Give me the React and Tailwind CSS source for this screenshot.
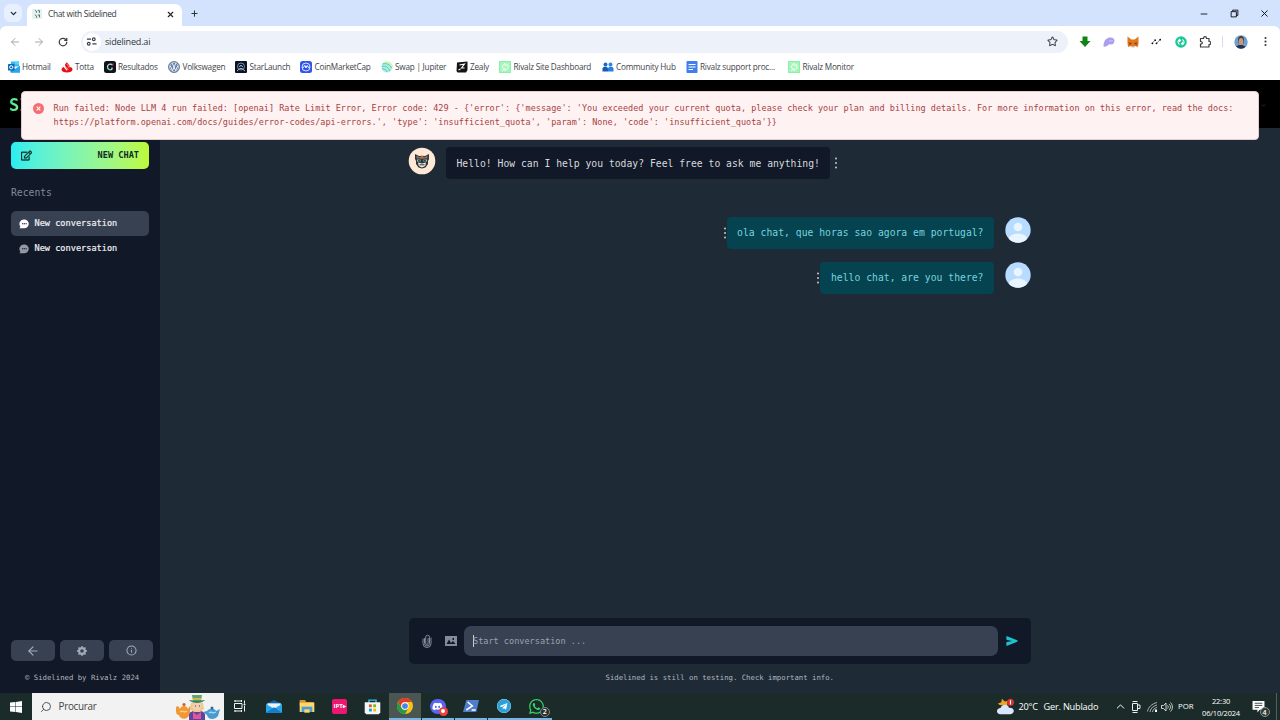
import React from "react";
import { ChevronDown, X, Plus, ArrowLeft, ArrowRight, RotateCw, Star, Minus, ChevronUp, Info, Search } from "lucide-react";
import { FaRegEdit, FaDiscord, FaTelegram, FaWhatsapp } from "react-icons/fa";
import { BsGearFill, BsThreeDotsVertical } from "react-icons/bs";
import { IoSend } from "react-icons/io5";

const ui = "font-['Open_Sans','Noto_Sans',sans-serif]";
const mono = "font-['DejaVu_Sans_Mono','Liberation_Mono',monospace]";

function Svg({ s = 12, vb = "0 0 24 24", children, className = "" }) {
  return (
    <svg width={s} height={s} viewBox={vb} fill="none" className={"shrink-0 " + className}>
      {children}
    </svg>
  );
}

const RivalzIcon = () => (
  <Svg>
    <rect x="1" y="1" width="22" height="22" fill="#a5f5bd" stroke="#8af0aa" strokeWidth="2" />
    <path d="M7 10l5-6v6l6-4M6 20l6-5v5l6-6M7 10v4l5 1M18 8v6" stroke="#f1fff5" strokeWidth="2" />
  </Svg>
);

const bookmarkIcons = {
  hotmail: (
    <Svg>
      <path d="M6 1h16v10H6z" fill="#35b8f1" />
      <path d="M14 1h8v6h-8z" fill="#50d9ff" />
      <path d="M5 10l9 6 10-6v13H5z" fill="#1490df" />
      <path d="M5 23l19-13v13z" fill="#28a8ea" />
      <rect x="0" y="6" width="13" height="13" rx="1" fill="#0f6cbd" />
      <circle cx="6.5" cy="12.5" r="3.2" stroke="#fff" strokeWidth="2" />
    </Svg>
  ),
  totta: (
    <Svg>
      <path d="M12 1c-1 4 6 6 5 11 4 0 6 2 6 5 0 4-5 6-11 6S1 21 1 17c0-3 3-5 5-5 0 3 5 5 6 8 2-5-5-7-4-12 0-3 4-4 4-7z" fill="#e60f13" />
      <path d="M8 9c1 4 6 5 6 9M12 6c1 3 4 4 4 8" stroke="#fff" strokeWidth="1" />
    </Svg>
  ),
  results: (
    <Svg>
      <rect width="24" height="24" rx="5" fill="#10151d" />
      <path d="M17 8c-4-4-10-1-10 4s6 7 9 4v-3" stroke="#d8e8e3" strokeWidth="2.4" />
      <path d="M15 6l4-1-1 5z" fill="#e5405e" />
      <path d="M7 12c0 5 4 6 7 5" stroke="#4ddca4" strokeWidth="2" />
    </Svg>
  ),
  vw: (
    <Svg>
      <circle cx="12" cy="12" r="11" fill="#6682a8" stroke="#51698a" strokeWidth="1.5" />
      <circle cx="12" cy="12" r="9" stroke="#cfd9e6" strokeWidth="1.5" />
      <path d="M8 4l4 8 4-8M4 9l5 10 3-7 3 7 5-10" stroke="#fff" strokeWidth="1.8" />
    </Svg>
  ),
  star: (
    <Svg>
      <rect width="24" height="24" rx="2" fill="#0d1420" />
      <circle cx="12" cy="11" r="7" stroke="#7390b9" strokeWidth="2" />
      <path d="M4 20l6-5h4l6 5M9 12a3 3 0 016 0" stroke="#a5bbdb" strokeWidth="2" />
    </Svg>
  ),
  cmc: (
    <Svg>
      <rect width="24" height="24" rx="5" fill="#3156ee" />
      <circle cx="12" cy="12" r="8" stroke="#d6defc" strokeWidth="2" />
      <path d="M5 13c3 2 3-5 5-4l2 5 2-5c3 0 1 6 5 4" stroke="#fff" strokeWidth="2" />
    </Svg>
  ),
  jup: (
    <Svg>
      <circle cx="12" cy="12" r="11" fill="#b5edda" />
      <path d="M3 6c9-3 15 2 18 8M2 11c7-2 13 1 15 9M2 16c5-1 9 2 10 6" stroke="#3fcbcf" strokeWidth="2" />
      <path d="M6 3c7-1 14 2 17 8" stroke="#d9f4a5" strokeWidth="3" />
    </Svg>
  ),
  zealy: (
    <Svg>
      <path d="M2 3l21-2v17l-3 5H3L1 20z" fill="#141414" />
      <path d="M7 8l10-2-6 8h6M5 18l4-2" stroke="#fff" strokeWidth="2.2" />
    </Svg>
  ),
  rivalz: <RivalzIcon />,
  people: (
    <Svg>
      <circle cx="7" cy="7" r="4" fill="#196ccd" />
      <circle cx="17" cy="7" r="4" fill="#2c88e8" />
      <path d="M1 21v-6c0-5 11-5 11 0v6z" fill="#145cb3" />
      <path d="M12 21v-6c0-5 11-5 11 0v6z" fill="#2680e0" />
    </Svg>
  ),
  doc: (
    <Svg>
      <rect x="1" y="0" width="22" height="24" rx="2" fill="#3f7fed" />
      <path d="M5 7h14M5 12h14M5 17h9" stroke="#fff" strokeWidth="2.4" />
    </Svg>
  ),
};

const bookmarks = [
  ["hotmail", "Hotmail", "w-[53px]"],
  ["totta", "Totta", "w-[43px]"],
  ["results", "Resultados", "w-[64.5px]"],
  ["vw", "Volkswagen", "w-[67px]"],
  ["star", "StarLaunch", "w-[65px]"],
  ["cmc", "CoinMarketCap", "w-[80.5px]"],
  ["jup", "Swap | Jupiter", "w-[75px]"],
  ["zealy", "Zealy", "w-[43.5px]"],
  ["rivalz", "Rivalz Site Dashboard", "w-[102.5px]"],
  ["people", "Community Hub", "w-[84px]"],
  ["doc", "Rivalz support proc...", "w-[102.5px]"],
  ["rivalz", "Rivalz Monitor", "w-[80px]"],
];

function Browser() {
  return (
    <header className={ui + " h-[80px] shrink-0 bg-white"}>
      <div className="flex h-[26px] items-end bg-[#d3e3fd]">
        <div className="mb-[4px] ml-[4px] flex h-[18px] w-[18px] items-center justify-center rounded-md bg-[#e9f0fd]">
          <ChevronDown size={9} strokeWidth={3.5} color="#1f2937" />
        </div>
        <div className="ml-[5px] flex h-[22px] w-[155px] items-center rounded-t-[7px] bg-white pl-[5px] pr-[7px] pb-[2px]">
          <Svg s={10}>
            <rect width="24" height="24" fill="#e4f1ef" />
            <path d="M7 3l4 3v3M7 14l4 3v4M14 4h4v5M14 15l4-1v6" stroke="#52716f" strokeWidth="2.4" />
          </Svg>
          <span className="ml-[6px] flex-1 whitespace-nowrap text-[8.4px] leading-none tracking-[-0.34px] text-[#34383d]">Chat with Sidelined</span>
          <X size={9} strokeWidth={3} color="#202124" />
        </div>
        <div className="mb-[8px] ml-[8px]">
          <Plus size={9} strokeWidth={2.8} color="#303640" />
        </div>
        <div className="mb-[7px] ml-auto flex items-center pr-[10px]">
          <Minus size={10} strokeWidth={2.2} color="#111" />
          <Svg s={9} className="ml-[21px]">
            <path d="M3 7h14v14H3zM7 6V3h14v14h-4" stroke="#111" strokeWidth="2.5" />
          </Svg>
          <X size={11} strokeWidth={2.1} color="#111" className="ml-[20px]" />
        </div>
      </div>
      <div className="bg-[#d3e3fd]">
        <div className="flex h-[31px] items-center rounded-t-[6px] bg-white pl-[8.5px] text-[#4b4f55]">
          <ArrowLeft size={12} strokeWidth={2} color="#a5a7aa" />
          <ArrowRight size={12} strokeWidth={2} color="#a5a7aa" className="ml-[12px]" />
          <RotateCw size={10} strokeWidth={3} color="#3c4046" className="ml-[13px]" />
          <div className="ml-[13px] flex h-[22px] w-[987px] items-center rounded-full bg-[#edf2fa] pl-[2px] pr-[10px]">
            <div className="flex h-[18px] w-[18px] items-center justify-center rounded-full bg-white">
              <Svg s={11}>
                <path d="M2 7h9M14 17h9" stroke="#3c4043" strokeWidth="2.8" />
                <circle cx="17" cy="7" r="3" stroke="#3c4043" strokeWidth="2.5" />
                <circle cx="6" cy="17" r="3" stroke="#3c4043" strokeWidth="2.5" />
              </Svg>
            </div>
            <span className="ml-[4.5px] flex-1 text-[9.1px] leading-none tracking-[-0.22px] text-[#30343a]">sidelined.ai</span>
            <Star size={11} strokeWidth={2.2} color="#40454c" />
          </div>
          <Svg s={12} className="ml-[11.5px]"><path d="M7 1h10v9h6L12 22 1 10h6z" fill="#128214" /></Svg>
          <Svg s={12} className="ml-[12px]">
            <path d="M1 21C1 8 8 3 15 3c8 0 10 7 6 12-3 4-6 0-9 2s-7 6-11 4z" fill="#ac9ded" />
            <path d="M14 8v3M18 8v3" stroke="#d9d1fa" strokeWidth="2" />
          </Svg>
          <Svg s={12} className="ml-[12px]">
            <path d="M1 1l8 6h6l8-6v13l-1 8-6-2-3 2h-3l-2-2-6 2-1-8z" fill="#e4761b" />
            <path d="M3 12l6 3-4 4zM21 12l-6 3 4 4z" fill="#9d4c20" />
            <path d="M9 20h6v3H9z" fill="#c8bab0" />
            <path d="M7 13l3 2H7zM17 13l-3 2h3z" fill="#222" />
          </Svg>
          <Svg s={11} className="ml-[12px]">
            <path d="M3 15l5-5M13 15l6-6" stroke="#444" strokeWidth="1.4" />
            <circle cx="3" cy="16" r="2" fill="#111" /><circle cx="9" cy="9" r="2" fill="#111" />
            <circle cx="12" cy="16" r="2" fill="#111" /><circle cx="20" cy="8" r="2" fill="#111" />
          </Svg>
          <Svg s={12} className="ml-[13px]">
            <circle cx="12" cy="12" r="11.5" fill="#18c998" />
            <path d="M9 17c-4-3-4-8 0-10v5M15 7c4 3 4 8 0 10v-5M9 7l3 3M15 17l-3-3" stroke="#fff" strokeWidth="2.2" />
          </Svg>
          <Svg s={12} className="ml-[12px]">
            <path d="M3 5h6c0-5 6-5 6 0h5v6c5 0 5 6 0 6v5H3v-6c5 0 5-5 0-5z" stroke="#3b3d40" strokeWidth="2.4" strokeLinejoin="round" />
          </Svg>
          <div className="ml-[11px] h-[11px] w-px bg-[#d0dff6]" />
          <Svg s={14} className="ml-[11px]">
            <defs><clipPath id="face"><circle cx="12" cy="12" r="11.5" /></clipPath></defs>
            <g clipPath="url(#face)">
              <path d="M0 0h24v24H0z" fill="#6d9fd0" />
              <path d="M7 10C5-1 19-1 17 10l-1 5H8z" fill="#493d3b" />
              <ellipse cx="12" cy="11" rx="4" ry="6" fill="#c49985" />
              <path d="M2 24c1-7 6-6 7-7h6c1 2 6 1 7 7z" fill="#25364c" />
            </g>
          </Svg>
          <BsThreeDotsVertical size={11} color="#33363a" className="ml-[12px]" />
        </div>
      </div>
      <div className="flex h-[19px] items-center pl-[7.5px] pt-[0.5px]">
        {bookmarks.map(([icon, label, w], i) => (
          <div key={i} className={"flex shrink-0 items-center whitespace-nowrap " + w}>
            {bookmarkIcons[icon]}
            <span className="ml-[2.5px] text-[8.2px] leading-none tracking-[-0.22px] text-[#414449]">{label}</span>
          </div>
        ))}
      </div>
    </header>
  );
}

function ErrorToast() {
  return (
    <div className={mono + " absolute left-[21px] top-[11px] flex h-[49px] w-[1238px] rounded-[4px] border border-[#e3cccc] bg-[#fef2f2] pl-[11px] pt-[10px] text-[#a84343]"}>
      <Svg s={11} className="mt-[1px]">
        <circle cx="12" cy="12" r="12" fill="#f66d70" />
        <path d="M8 8l8 8M16 8l-8 8" stroke="#fff" strokeWidth="2.5" />
      </Svg>
      <div className="ml-[9.5px] whitespace-pre text-[8.5px] leading-[13.5px] tracking-[0.013px]">
        <div>{"Run failed: Node LLM 4 run failed: [openai] Rate Limit Error, Error code: 429 - {'error': {'message': 'You exceeded your current quota, please check your plan and billing details. For more information on this error, read the docs:"}</div>
        <div>{"https://platform.openai.com/docs/guides/error-codes/api-errors.', 'type': 'insufficient_quota', 'param': None, 'code': 'insufficient_quota'}}"}</div>
      </div>
    </div>
  );
}

function Bubble({ color }) {
  return (
    <Svg s={10} vb="0 0 20 20">
      <path d="M10.5 1a9 8.7 0 110 17.4H1l1.7-3.5A9 8.7 0 0110.5 1z" fill={color} />
      <path d="M6 9.5h2.5M9.5 9.5h2.5M13 9.5h2.5" stroke="#111827" strokeWidth="2" />
    </Svg>
  );
}

function Sidebar() {
  return (
    <aside className="flex w-[160px] shrink-0 flex-col bg-[#111827] pl-[11px]">
      <button className="mt-[13.5px] flex h-[27px] w-[138px] items-center justify-between rounded-[5px] bg-linear-to-r from-[#29edf0] to-[#bdf934] pl-[10px] pr-[10px] text-[8.6px] font-bold text-[#0e2c27]">
        <FaRegEdit size={11} stroke="#0e2c27" strokeWidth={16} />
        <span>NEW CHAT</span>
      </button>
      <div className="mt-[17.5px] text-[9.73px] leading-[14px] text-[#838b98]">Recents</div>
      <div className="mt-[11px] flex h-[25px] w-[138px] items-center rounded-[5px] bg-[#374151] pl-[8px] text-[8.6px] text-[#eef0f3]">
        <Bubble color="#ffffff" />
        <span className="ml-[5.5px] [-webkit-text-stroke:0.2px_#eef0f3]">New conversation</span>
      </div>
      <div className="flex h-[25px] w-[138px] items-center pl-[8px] text-[8.6px] text-[#eef0f3]">
        <Bubble color="#9299a5" />
        <span className="ml-[5.5px] [-webkit-text-stroke:0.2px_#eef0f3]">New conversation</span>
      </div>
      <div className="mt-auto flex gap-[5px] text-[#a4abb6]">
        <div className="flex h-[21px] w-[44px] items-center justify-center rounded-[5px] bg-[#374151]"><ArrowLeft size={14} strokeWidth={2} /></div>
        <div className="flex h-[21px] w-[44px] items-center justify-center rounded-[5px] bg-[#374151]"><BsGearFill size={10} /></div>
        <div className="flex h-[21px] w-[44px] items-center justify-center rounded-[5px] bg-[#374151]"><Info size={11} strokeWidth={2.2} /></div>
      </div>
      <div className="mb-[9px] mt-[11px] pl-[14px] text-[7.3px] leading-[12px] text-[#b1b6bf]">© Sidelined by Rivalz 2024</div>
    </aside>
  );
}

function UserAvatar() {
  return (
    <Svg s={26} vb="0 0 26 26" className="ml-[11px]">
      <defs><clipPath id="avatar"><circle cx="13" cy="13" r="12.7" /></clipPath></defs>
      <g clipPath="url(#avatar)">
        <path d="M0 0h26v26H0z" fill="#b7dcff" />
        <circle cx="13" cy="10" r="4.3" fill="#eaf6ff" />
        <ellipse cx="13" cy="22.5" rx="9.5" ry="6" fill="#eaf6ff" />
      </g>
    </Svg>
  );
}

function Dots() {
  return (
    <svg width="4" height="12" viewBox="0 0 4 12" className="mt-[10px] shrink-0" fill="#c6cad0">
      <circle cx="2" cy="1.4" r="1" /><circle cx="2" cy="6" r="1" /><circle cx="2" cy="10.6" r="1" />
    </svg>
  );
}

function UserMessage({ children }) {
  return (
    <div className="flex h-[32px] items-start justify-end">
      <Dots />
      <div className="h-[32px] rounded-[4px] bg-[#04434f] px-[10.5px] leading-[32px] tracking-[0.015px] text-[#78d3df]">{children}</div>
      <UserAvatar />
    </div>
  );
}

function Chat() {
  return (
    <main className="flex flex-1 flex-col bg-[#1f2a37]">
      <div className="ml-[248.5px] flex w-[622.5px] flex-1 flex-col text-[9.73px]">
        <div className="mt-[19px] flex items-start">
          <Svg s={28} vb="0 0 28 28" className="-ml-[0.5px] -mt-[0.5px]">
            <circle cx="14" cy="14" r="13.3" fill="#fee9d7" />
            <path d="M7 7l4 2h6l4-2v5l-1 2v3l-2.5 3.5-3.5 1-3.5-1L8 17v-3l-1-2z" fill="#3b3031" />
            <path d="M8.500 8.500l2.500 1.500h6l2.500-1.500v3h-11z" fill="#6d7b74" />
            <path d="M12.800 8.500h2.400v3h-2.400z" fill="#e0574e" />
            <path d="M9 13.500h3.500M15.500 13.500H19" stroke="#68dfc5" strokeWidth="1.800" />
            <path d="M10.300 12.800h1.500v1.500h-1.500zM16.200 12.800h1.500v1.500h-1.500z" fill="#222" />
            <path d="M10 15.500l4 1 4-1-.8 3.500-3.200 1.500L10.800 19z" fill="#e3f1ee" />
            <path d="M11.500 17.800h5" stroke="#333" />
          </Svg>
          <div className="ml-[10px] h-[32px] rounded-[4px] bg-[#111827] px-[10.5px] leading-[33px] tracking-[0.010px] text-[#d7dade]">Hello! How can I help you today? Feel free to ask me anything!</div>
          <div className="ml-[4px]"><Dots /></div>
        </div>
        <div className="mt-[38px] flex flex-col gap-[13.4px]">
          <UserMessage>ola chat, que horas sao agora em portugal?</UserMessage>
          <UserMessage>hello chat, are you there?</UserMessage>
        </div>
        <div className="mt-auto flex h-[46px] items-center rounded-[5px] bg-[#111827] pl-[11.5px] text-[#7c8492]">
          <Svg s={14} vb="0 0 14 14">
            <path d="M4.500 4.500v5a2.500 2.500 0 005 0V3.200a1.900 1.900 0 00-3.800 0v6a1.200 1.200 0 002.400 0V4.500M3 5v4.500a4 4 0 008 0V4" stroke="#858c98" strokeWidth="1" strokeLinecap="round" />
          </Svg>
          <Svg s={12} vb="0 0 12 11" className="ml-[10.5px]">
            <path fillRule="evenodd" clipRule="evenodd" d="M0 .5h12v10H0zM1.500 8.500h9L8 5.500 6 7.500 4 4z M7.500 2.500v2H9v-2z" fill="#858c98" />
          </Svg>
          <div className="ml-[7.5px] flex h-[30px] w-[534px] items-center rounded-[7px] bg-[#374151] pl-[9px] pt-[1px] text-[8.55px] text-[#9aa2ae]">
            <span className="-mr-px h-[12px] w-px bg-[#c9cdd3]" />
            Start conversation ...
          </div>
          <IoSend size={12} color="#1fc3cd" className="ml-[7.5px]" />
        </div>
        <div className="mb-[9px] mt-[8.5px] text-center text-[7.3px] leading-[12px] text-[#b0b6be]">Sidelined is still on testing. Check important info.</div>
      </div>
    </main>
  );
}

function Task({ children, active, open }) {
  return (
    <div className={"flex h-full w-[32px] shrink-0 items-center justify-center border-b-2 pt-px " + (active ? "bg-[#4a5652] " : "") + (active || open ? "border-[#76b5e6]" : "border-transparent")}>
      {children}
    </div>
  );
}

function Taskbar() {
  return (
    <footer className={ui + " flex h-[27px] shrink-0 items-center bg-[#1b2b29] text-white"}>
      <div className="flex w-[32px] justify-center">
        <Svg s={12}><path d="M0 3l11-1v9H0zM12 2l12-2v11H12zM0 12h11v10L0 21zM12 12h12v12l-12-2z" fill="#fff" /></Svg>
      </div>
      <div className="flex h-[27px] w-[192px] items-center bg-[#f2f2f2] pl-[8px] text-[#444]">
        <Search size={12} strokeWidth={1.8} className="-scale-x-100" />
        <span className="ml-[6.5px] flex-1 pt-[1px] text-[9.9px] leading-none tracking-[-0.3px]">Procurar</span>
        <svg width="46" height="26" viewBox="0 0 46 26" className="mr-[3px]">
          <path d="M1 13c3-2 3 1 4 2 1-4 7-4 8 0l2-3 1 2-2 7c-1 5-9 5-10 0-3 0-3-3-3-6z" fill="#f29636" />
          <circle cx="9" cy="10.5" r="1.6" fill="#ce661c" />
          <path d="M5 18c2-2 5 1 7-1" stroke="#fbd066" strokeWidth="1.5" fill="none" />
          <path d="M14 20c3-5 13-5 16 0v6H14z" fill="#5c449f" />
          <path d="M18 18l4 3 4-3v7h-8z" fill="#e4549a" />
          <path d="M16 9h12l1 6-4 3h-6l-4-3z" fill="#ecc98b" />
          <circle cx="22" cy="12" r="4.5" fill="#f4ceb0" />
          <path d="M17 1h10l-1 6h-8z" fill="#5fa472" />
          <path d="M14 6c5 1 11 1 16 0-3 4-13 4-16 0z" fill="#3c825c" />
          <path d="M18 5h8" stroke="#d5b747" strokeWidth="2" />
          <path d="M20 12h1M24 12h1" stroke="#3a3e4c" />
          <path d="M32 17c2-3 8-3 9 0l4-2-2 7c-3 4-10 4-11-1l-4-3z" fill="#499bd0" />
          <circle cx="37" cy="14" r="1.5" fill="#33669d" />
          <path d="M34 19c2-2 4 1 7-1" stroke="#a2d9ef" strokeWidth="1.5" fill="none" />
        </svg>
      </div>
      <Task>
        <Svg s={12}><path d="M1 2h15M1 7h15v10H1zM1 22h15M2 0v4M15 0v4M2 20v4M15 20v4M21 1v6M21 12v11" stroke="#f1f4f3" strokeWidth="2" /><circle cx="21" cy="9" r="2" fill="#fff" /></Svg>
      </Task>
      <div className="ml-[2px] flex h-full items-center gap-[0.8px]">
        <Task>
          <Svg s={16}><path d="M0 9L12 3l12 6v13H0z" fill="#1463a8" /><path d="M2 8h20v8H2z" fill="#e9f3fb" /><path d="M0 9l12 7 12-7v13H0z" fill="#28a6e9" /><path d="M0 22l12-8 12 8z" fill="#137ccb" /></Svg>
        </Task>
        <Task>
          <Svg s={16}><path d="M1 3h8l2 3h11v5H1z" fill="#d99624" /><path d="M1 7h22v14H1z" fill="#ffd86b" /><path d="M4 13h16v8H4z" fill="#4b9ed5" /><path d="M8 17h8v5H8z" fill="#ffd86b" /></Svg>
        </Task>
        <Task>
          <div className="flex h-[15px] w-[15px] items-center justify-center rounded-[2px] bg-[#ed1671] text-[6px] font-bold leading-none">IPT▸</div>
        </Task>
        <Task>
          <Svg s={17}><path d="M7 7V3h10v4" stroke="#43b8eb" strokeWidth="2" /><path d="M1 6h22v14l-2 3H3l-2-3z" fill="#f5f7f7" /><path d="M7 9h4v4H7z" fill="#f05323" /><path d="M13 9h4v4h-4z" fill="#7fba00" /><path d="M7 15h4v4H7z" fill="#00a4ef" /><path d="M13 15h4v4h-4z" fill="#ffb900" /></Svg>
        </Task>
        <Task active>
          <Svg s={16}><circle cx="12" cy="12" r="12" fill="#fbc116" /><path d="M1.600 6A12 12 0 0122.400 6H12a6 6 0 00-5.200 9z" fill="#e33b2e" /><path d="M1.600 6A12 12 0 0012 24l5.200-9A6 6 0 016.800 15z" fill="#229a4b" /><circle cx="12" cy="12" r="5.500" fill="#fff" /><circle cx="12" cy="12" r="4.300" fill="#4285f4" /></Svg>
        </Task>
        <Task open>
          <div className="relative flex h-[15px] w-[16px] items-center justify-center rounded-full bg-[#5865f2]">
            <FaDiscord size={11} />
            <div className="absolute -bottom-[2px] -right-[2px] flex h-[9px] w-[9px] items-center justify-center rounded-full bg-[#ed4245]"><div className="h-[4px] w-[4px] rounded-full bg-white" /></div>
          </div>
        </Task>
        <Task open>
          <Svg s={16}><path d="M5 3h19l-4 18H0z" fill="#4f7dcb" /><path d="M7 6l7 6-9 6M13 18h6" stroke="#fff" strokeWidth="2.300" /></Svg>
        </Task>
        <Task open><div className="rounded-full bg-white"><FaTelegram size={14} color="#2aa1da" /></div></Task>
        <Task open>
          <div className="relative">
            <FaWhatsapp size={17} color="#35d366" />
            <div className="absolute -bottom-[2px] -right-[5px] flex h-[10px] w-[10px] items-center justify-center rounded-full border border-[#808986] bg-[#27312f] text-[7px] font-semibold leading-none">2</div>
          </div>
        </Task>
      </div>
      <div className="ml-auto flex h-full items-center whitespace-nowrap">
        <Svg s={17}>
          <path d="M4 10l-3-2 5-2 1-5 4 4 5-1-2 7z" fill="#f0a620" />
          <path d="M4 23c-6-1-5-9 1-9 2-6 11-6 12 0 8-1 9 8 2 9z" fill="#d9e7fb" />
          <circle cx="19" cy="6" r="5" fill="#d83334" /><path d="M19 3v6" stroke="#fff" strokeWidth="1.5" />
        </Svg>
        <span className="ml-[4.5px] w-[25px] text-[9.2px] tracking-[-0.2px]">20°C</span>
        <span className="w-[70px] text-[9.2px] tracking-[-0.2px]">Ger. Nublado</span>
        <ChevronUp size={13} strokeWidth={1.8} />
        <Svg s={12} className="ml-[3px]"><path d="M5 1h10M5 5h10v14H5zM5 23h10M15 8h5v7h-5" stroke="#e8eeeb" strokeWidth="2" /></Svg>
        <Svg s={12} className="ml-[4px]"><path d="M3 21C5 12 11 6 22 3M8 22c1-8 7-12 14-14M13 22c1-5 4-8 9-9" stroke="#b9c2be" strokeWidth="1.8" /><path d="M18 17h4v5h-4z" fill="#fff" /></Svg>
        <Svg s={12} className="ml-[3px]"><path d="M1 9h4l5-5v16l-5-5H1zM13 9c2 2 2 4 0 6M16 6c4 4 4 8 0 12M19 3c5 5 5 13 0 18" stroke="#e8eeeb" strokeWidth="1.7" /></Svg>
        <span className="ml-[5.5px] w-[17px] text-[7.8px]">POR</span>
        <div className="ml-[5px] w-[42px] text-center text-[7.5px] leading-[12px] tracking-[-0.2px]"><div>22:30</div><div>06/10/2024</div></div>
        <div className="relative ml-[9.5px] mr-[11.5px]">
          <Svg s={13}><path d="M1 2h22v16h-9l-4 5v-5H1z" fill="#fff" /><path d="M5 6h14M5 10h14M5 14h8" stroke="#1b2b29" strokeWidth="1.5" /></Svg>
          <div className="absolute -bottom-[4px] -right-[5px] flex h-[10px] w-[10px] items-center justify-center rounded-full border border-[#88918d] bg-[#303c39] text-[7px] font-semibold leading-none">4</div>
        </div>
        <div className="h-full w-[4px] border-l border-[#53615d]" />
      </div>
    </footer>
  );
}

export default function App() {
  return (
    <div className="flex h-[720px] w-[1280px] flex-col overflow-hidden bg-[#111827]">
      <Browser />
      <div className={mono + " relative flex min-h-0 flex-1 flex-col"}>
        <div className="flex h-[48px] shrink-0 items-center justify-between bg-black pl-[9px] pr-[14px] pt-[2px]">
          <span className="bg-linear-to-r from-[#35e6a1] to-[#abf638] bg-clip-text text-[17px] font-bold leading-[20px] text-transparent">SI</span>
          <ChevronDown size={5} color="#777" />
        </div>
        <div className="flex min-h-0 flex-1"><Sidebar /><Chat /></div>
        <ErrorToast />
      </div>
      <Taskbar />
    </div>
  );
}
